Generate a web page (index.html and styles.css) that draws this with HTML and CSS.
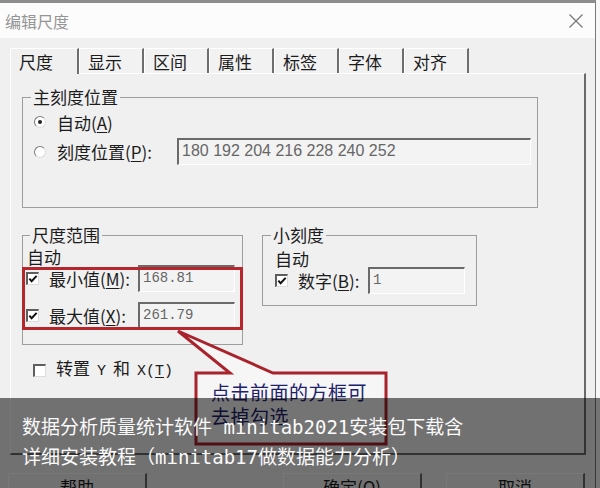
FILE: index.html
```html
<!DOCTYPE html>
<html lang="zh-CN">
<head>
    <meta charset="UTF-8">
    <title>编辑尺度</title>
    <link rel="stylesheet" href="styles.css">
</head>
<body>
    <div class="screen">
        <div class="window">
            <div class="titlebar">
                <span class="title">编辑尺度</span>
                <svg class="close" width="16" height="14" viewBox="0 0 16 14">
                    <path d="M1.5 0.5 L14.5 13.5 M14.5 0.5 L1.5 13.5" stroke="#7a7a7a" stroke-width="1.3" fill="none"/>
                </svg>
            </div>
            <div class="dialog">
                <div class="tabs">
                    <div class="tab active">尺度</div>
                    <div class="tab">显示</div>
                    <div class="tab">区间</div>
                    <div class="tab">属性</div>
                    <div class="tab">标签</div>
                    <div class="tab">字体</div>
                    <div class="tab">对齐</div>
                </div>
                <div class="panel">
                    <fieldset class="group major">
                        <legend>主刻度位置</legend>
                        <div class="row first"><span class="radio on"></span>自动(<u>A</u>)</div>
                        <div class="row second"><span class="radio"></span>刻度位置(<u>P</u>):<span class="field wide">180 192 204 216 228 240 252</span></div>
                    </fieldset>
                    <div class="ranges">
                        <fieldset class="group range">
                            <legend>尺度范围</legend>
                            <div class="auto">自动</div>
                            <div class="row entry"><span class="check on"><svg width="11" height="10" viewBox="0 0 11 10"><path d="M1.5 4.5 L4 7.5 L9.5 1.5" stroke="#111" stroke-width="2.2" fill="none"/></svg></span>最小值(<u>M</u>):<span class="field small mono">168.81</span></div>
                            <div class="row entry next"><span class="check on"><svg width="11" height="10" viewBox="0 0 11 10"><path d="M1.5 4.5 L4 7.5 L9.5 1.5" stroke="#111" stroke-width="2.2" fill="none"/></svg></span>最大值(<u>X</u>):<span class="field small mono">261.79</span></div>
                        </fieldset>
                        <fieldset class="group minor">
                            <legend>小刻度</legend>
                            <div class="auto">自动</div>
                            <div class="row entry"><span class="check on"><svg width="11" height="10" viewBox="0 0 11 10"><path d="M1.5 4.5 L4 7.5 L9.5 1.5" stroke="#111" stroke-width="2.2" fill="none"/></svg></span>数字(<u>B</u>):<span class="field small mono">1</span></div>
                        </fieldset>
                    </div>
                    <div class="row transpose"><span class="check"></span><span class="label">转置<span class="latin">Y</span>和<span class="latin">X(<u>T</u>)</span></span></div>
                </div>
                <div class="buttons">
                    <div class="button help">帮助</div>
                    <div class="button ok">确定(<u>O</u>)</div>
                    <div class="button cancel">取消</div>
                </div>
            </div>
        </div>
        <div class="behind"></div>

        <div class="mark-box"></div>
        <svg class="callout" width="222" height="125" viewBox="0 0 222 125">
            <path d="M26 48 L60 48 L8 6 L103 48 L216 48 L216 119 L26 119 Z" fill="#f6f6f6" stroke="#a8232b" stroke-width="3" stroke-linejoin="miter"/>
        </svg>
        <div class="callout-text">点击前面的方框可<br>去掉勾选</div>

        <div class="caption">
            <div>数据分析质量统计软件 minitab2021安装包下载含</div>
            <div>详细安装教程（minitab17做数据能力分析）</div>
        </div>
    </div>
</body>
</html>
```

FILE: styles.css
```css
body {
    margin: 0;
    width: 600px;
    height: 488px;
    overflow: hidden;
    background: #fff;
    font-family: "Noto Sans CJK SC", sans-serif;
    color: #1c1c1c;
}
.screen {
    position: relative;
    display: flex;
    height: 488px;
}
.window {
    width: 596px;
    height: 488px;
    box-sizing: border-box;
    border-top: 3px solid #8d8d8d;
    border-right: 1px solid #7a7a7a;
    background: #f0f0f0;
}
.behind {
    flex: 1;
    background: #f7f7f7;
}
.titlebar {
    height: 35px;
    background: #fcfcfc;
    display: flex;
    align-items: center;
    justify-content: space-between;
    padding: 0 11px 0 5px;
}
.title {
    font-size: 16px;
    color: #959595;
}
.dialog {
    padding-top: 10px;
}
.tabs {
    display: flex;
    margin-left: 10px;
    height: 25px;
}
.tab {
    width: 65px;
    box-sizing: border-box;
    padding-left: 8px;
    font-size: 17px;
    line-height: 25px;
    border-top: 1px solid #fff;
    border-left: 1px solid #fff;
    border-right: 2px solid #6e6e6e;
    background: #f2f2f2;
}
.tab.active {
    width: 69px;
    position: relative;
    z-index: 1;
    height: 26px;
    background: #f0f0f0;
}
.panel {
    margin-left: 10px;
    width: 576px;
    height: 382px;
    box-sizing: border-box;
    border-top: 1px solid #fff;
    border-left: 1px solid #fff;
    border-right: 2px solid #6a6a6a;
    border-bottom: 2px solid #6a6a6a;
    padding-top: 13px;
}
.group {
    margin: 0;
    border: 1px solid #9d9d9d;
    box-sizing: border-box;
}
.group legend {
    font-size: 17px;
    line-height: 20px;
    padding: 0 2px;
}
.major {
    margin-left: 11px;
    width: 516px;
    padding: 4px 6px 42px 11px;
}
.major legend {
    margin-left: -3px;
}
.row {
    display: flex;
    align-items: center;
    font-size: 17px;
    white-space: nowrap;
}
.row u {
    text-decoration-thickness: 1px;
    text-underline-offset: 2px;
}
.row.first {
    height: 22px;
}
.row.second {
    height: 27px;
    margin-top: 5px;
}
.radio {
    width: 12px;
    height: 12px;
    box-sizing: border-box;
    border-radius: 50%;
    border: 1px solid;
    border-color: #7a7a7a #dcdcdc #dcdcdc #7a7a7a;
    background: #fff;
    margin-right: 11px;
    display: flex;
    align-items: center;
    justify-content: center;
}
.radio.on::after {
    content: "";
    width: 4px;
    height: 4px;
    border-radius: 50%;
    background: #222;
}
.check {
    width: 13px;
    height: 13px;
    box-sizing: border-box;
    border-top: 2px solid #5e5e5e;
    border-left: 2px solid #5e5e5e;
    border-right: 1px solid #dcdcdc;
    border-bottom: 1px solid #dcdcdc;
    background: #fff;
    margin-right: 10px;
    display: flex;
    align-items: center;
    justify-content: center;
}
.field {
    margin-left: auto;
    height: 27px;
    box-sizing: border-box;
    border-top: 2px solid #6a6a6a;
    border-left: 2px solid #6a6a6a;
    border-right: 1px solid #fff;
    border-bottom: 1px solid #fff;
    background: #f3f3f3;
    color: #666;
    padding: 1px 0 0 3px;
    line-height: 20px;
    align-self: flex-start;
}
.field.wide {
    width: 354px;
    font-family: "Liberation Sans", sans-serif;
    font-size: 16px;
}
.field.small {
    width: 97px;
}
.mono {
    font-family: "Liberation Mono", monospace;
    font-size: 14px;
}
.ranges {
    display: flex;
    align-items: flex-start;
    gap: 19px;
    margin: 17px 0 0 11px;
}
.range {
    width: 221px;
    padding: 3px 7px 15px 3px;
}
.range legend {
    margin-left: 4px;
}
.minor {
    width: 215px;
    padding: 5px 11px 11px 12px;
}
.minor legend {
    margin-left: -4px;
}
.auto {
    font-size: 17px;
    line-height: 17px;
}
.range .auto {
    margin-left: 1px;
}
.row.entry {
    height: 27px;
}
.row.next {
    margin-top: 10px;
}
.row.transpose {
    height: 20px;
    margin: 15px 0 0 22px;
}
.label {
    line-height: 20px;
}
.latin {
    font-family: "Liberation Mono", monospace;
    font-size: 15px;
    margin: 0 7px;
}
.latin:last-child {
    margin-right: 0;
}
.buttons {
    display: flex;
    margin-top: 18px;
}
.button {
    width: 139px;
    height: 26px;
    box-sizing: border-box;
    border-top: 1px solid #fff;
    border-left: 1px solid #fff;
    border-right: 2px solid #6a6a6a;
    border-bottom: 2px solid #6a6a6a;
    text-align: center;
    font-size: 17px;
    line-height: 26px;
}
.help {
    margin-left: 8px;
}
.ok {
    margin-left: 136px;
}
.cancel {
    margin-left: 24px;
}

/* annotation layer drawn over the dialog */
.mark-box {
    position: absolute;
    left: 22px;
    top: 267px;
    width: 221px;
    height: 63px;
    box-sizing: border-box;
    border: 3px solid #b8262d;
}
.callout {
    position: absolute;
    left: 170px;
    top: 325px;
}
.callout-text {
    position: absolute;
    left: 211px;
    top: 380px;
    font-size: 19px;
    line-height: 24px;
    letter-spacing: 0.5px;
    color: #20216b;
}
.caption {
    position: absolute;
    left: 0;
    top: 398px;
    width: 600px;
    height: 90px;
    box-sizing: border-box;
    padding: 14px 0 0 22px;
    background: rgba(0, 0, 0, 0.53);
    color: #fafafa;
    font-family: "DejaVu Sans Mono", "Noto Sans CJK SC", monospace;
    font-size: 19px;
    line-height: 30px;
}
```
